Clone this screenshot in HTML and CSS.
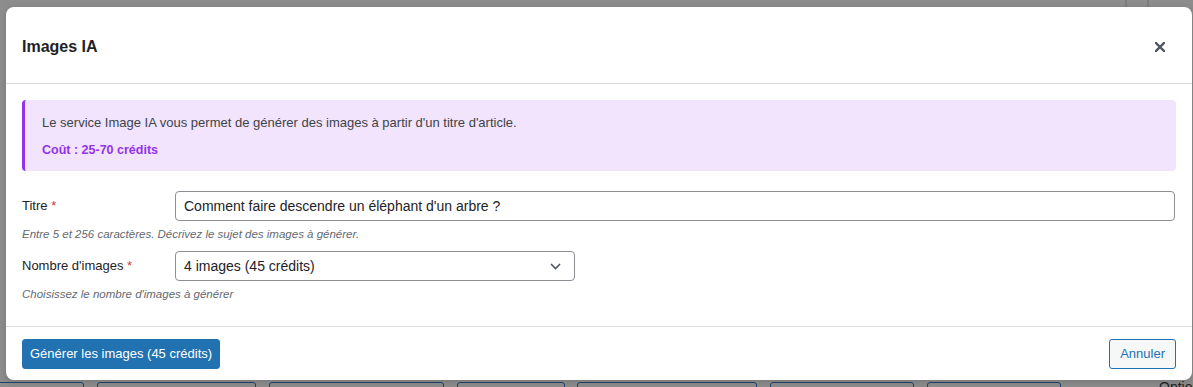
FILE: index.html
```html
<!DOCTYPE html>
<html lang="fr">
<head>
<meta charset="utf-8">
<title>Images IA</title>
<link rel="stylesheet" href="styles.css">
</head>
<body>
<div class="page">
  <div class="topbar"><span class="sep sep-a"></span><span class="sep sep-b"></span></div>
  <div class="page-mid"></div>
  <div class="toolbar">
    <span class="ghost g1"></span>
    <span class="ghost g2"></span>
    <span class="ghost g3"></span>
    <span class="ghost g4"></span>
    <span class="ghost g5"></span>
    <span class="ghost g6"></span>
    <span class="ghost g7"></span>
    <span class="vsep"></span>
    <span class="ghost-text">Options</span>
  </div>
</div>

<div class="modal" role="dialog" aria-labelledby="modal-title">
  <header class="modal-header">
    <h1 class="modal-title" id="modal-title">Images IA</h1>
    <button class="close" aria-label="Fermer">
      <svg width="10" height="10" viewBox="0 0 10 10"><path d="M1 1L9 9M9 1L1 9" stroke="#50575e" stroke-width="2.4" stroke-linecap="square" fill="none"/></svg>
    </button>
  </header>
  <div class="modal-body">
    <div class="notice">
      <p class="notice-text">Le service Image IA vous permet de générer des images à partir d'un titre d'article.</p>
      <p class="notice-cost">Coût : 25-70 crédits</p>
    </div>
    <div class="field">
      <label class="field-label">Titre <span class="req">*</span></label>
      <input class="text-input" type="text" value="Comment faire descendre un éléphant d'un arbre ?">
    </div>
    <p class="help">Entre 5 et 256 caractères. Décrivez le sujet des images à générer.</p>
    <div class="field field-second">
      <label class="field-label">Nombre d'images <span class="req">*</span></label>
      <div class="select">
        <span class="select-value">4 images (45 crédits)</span>
        <svg class="chevron" width="11" height="7" viewBox="0 0 11 7"><path d="M1 1L5.5 5.5L10 1" stroke="#50575e" stroke-width="1.6" fill="none"/></svg>
      </div>
    </div>
    <p class="help">Choisissez le nombre d'images à générer</p>
  </div>
  <footer class="modal-footer">
    <button class="btn btn-primary">Générer les images (45 crédits)</button>
    <button class="btn btn-secondary">Annuler</button>
  </footer>
</div>
</body>
</html>
```

FILE: styles.css
```css
* { box-sizing: border-box; }

html, body {
  margin: 0;
  padding: 0;
  height: 387px;
  overflow: hidden;
}

body {
  background: #8c8c8c;
  font-family: "Liberation Sans", Arial, sans-serif;
  color: #1d2327;
  position: relative;
}

/* background page under the overlay */
.page {
  height: 387px;
  display: flex;
  flex-direction: column;
}
.topbar {
  height: 7px;
  display: flex;
}
.sep {
  width: 2px;
  height: 7px;
  background: #7c7c7c;
}
.sep-a { margin-left: 1125px; }
.sep-b { margin-left: 20px; }
.page-mid { flex: 1; }
.toolbar {
  height: 5px;
  display: flex;
  align-items: flex-start;
}
.ghost {
  height: 20px;
  border: 1px solid #1f4469;
  border-radius: 3px;
  margin-left: 13px;
  flex: none;
}
.g1 { width: 94px; margin-left: -10px; }
.g2 { width: 159px; }
.g3 { width: 175px; }
.g4 { width: 108px; margin-left: 13px; }
.g5 { width: 180px; margin-left: 12px; }
.g6 { width: 144px; }
.g7 { width: 134px; }
.vsep {
  width: 1px;
  height: 20px;
  background: #6f6f6f;
  margin-left: 65px;
}
.ghost-text {
  margin-left: 33px;
  margin-top: -3px;
  font-size: 14px;
  line-height: 16px;
  color: #222;
}

/* modal */
.modal {
  position: absolute;
  left: 6px;
  top: 7px;
  width: 1186px;
  height: 373px;
  background: #fff;
  border-radius: 8px;
  display: flex;
  flex-direction: column;
  box-shadow: 0 2px 6px rgba(0,0,0,0.15);
}

.modal-header {
  height: 77px;
  padding: 3px 27px 0 16px;
  border-bottom: 1px solid #dcdcde;
  display: flex;
  align-items: center;
  justify-content: space-between;
  flex: none;
}
.modal-title {
  margin: 0;
  font-size: 16px;
  font-weight: 700;
  line-height: 20px;
  color: #1d2327;
}
.close {
  border: 0;
  background: none;
  padding: 0;
  width: 10px;
  height: 10px;
  display: flex;
  cursor: pointer;
}

.modal-body {
  height: 242px;
  padding: 16px 16px 0 16px;
  flex: none;
}

.notice {
  height: 71px;
  background: #f2e4fc;
  border-left: 3px solid #9333ea;
  border-radius: 4px;
  padding: 13px 17px 0 17px;
}
.notice-text {
  margin: 0;
  font-size: 13px;
  line-height: 20px;
  color: #3c434a;
}
.notice-cost {
  margin: 7px 0 0;
  font-size: 12.5px;
  line-height: 20px;
  font-weight: 700;
  color: #9333ea;
}

.field {
  display: flex;
  align-items: center;
  margin-top: 20px;
}
.field-second { margin-top: 9px; }
.field-label {
  width: 153px;
  flex: none;
  font-size: 13px;
  line-height: 20px;
  color: #1d2327;
}
.req { color: #d63638; }

.text-input {
  flex: 1;
  height: 30px;
  margin: 0 1px 0 0;
  padding: 0 8px;
  border: 1px solid #8c8f94;
  border-radius: 4px;
  font-family: inherit;
  font-size: 14px;
  color: #1d2327;
  background: #fff;
  outline: none;
}

.select {
  width: 400px;
  height: 30px;
  padding: 0 8px 0 8px;
  border: 1px solid #8c8f94;
  border-radius: 4px;
  display: flex;
  align-items: center;
  justify-content: space-between;
  font-size: 14px;
  color: #1d2327;
}
.chevron { margin-right: 5px; }

.help {
  margin: 5px 0 0;
  font-size: 11.5px;
  line-height: 16px;
  font-style: italic;
  color: #646970;
}

.modal-footer {
  flex: 1;
  border-top: 1px solid #dcdcde;
  padding: 12px 16px 0 16px;
  display: flex;
  align-items: flex-start;
  justify-content: space-between;
}
.btn {
  height: 30px;
  border-radius: 3px;
  font-family: inherit;
  font-size: 13px;
  line-height: 28px;
  padding: 0 7px;
  cursor: pointer;
}
.btn-primary {
  background: #2271b1;
  border: 1px solid #2271b1;
  color: #fff;
}
.btn-secondary {
  background: #f6f7f7;
  border: 1px solid #2271b1;
  color: #2271b1;
  padding: 0 10px;
}
```
